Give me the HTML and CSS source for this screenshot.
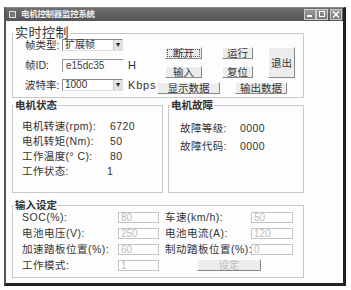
FILE: index.html
```html
<!DOCTYPE html>
<html>
<head>
<meta charset="utf-8">
<link rel="stylesheet" href="styles.css">
</head>
<body>
<div class="screen">
  <div class="window">
    <div class="titlebar">
      <span class="appicon"></span>
      <span class="title">电机控制器监控系统</span>
      <span class="tb-btns">
        <span class="tb-btn"><svg width="10" height="9" viewBox="0 0 10 9"><rect x="2" y="5" width="5" height="2" fill="#fff"/></svg></span>
        <span class="tb-btn"><svg width="10" height="9" viewBox="0 0 10 9"><rect x="2.5" y="1.5" width="5" height="5" fill="none" stroke="#fff" stroke-width="1"/></svg></span>
        <span class="tb-btn close"><svg width="10" height="9" viewBox="0 0 10 9"><path d="M2 1.5 L8 7.5 M8 1.5 L2 7.5" stroke="#fff" stroke-width="1.6"/></svg></span>
      </span>
    </div>
    <div class="client">
      <div class="group g1">
        <div class="legend big">实时控制</div>
        <div class="g1-body">
          <div class="params">
            <span class="plabel">帧类型:</span>
            <span class="select"><span class="sv">扩展帧</span><span class="arrow">▾</span></span>
            <span></span>
            <span class="plabel">帧ID:</span>
            <span class="edit">e15dc35</span>
            <span class="unit">H</span>
            <span class="plabel">波特率:</span>
            <span class="select"><span class="sv">1000</span><span class="arrow">▾</span></span>
            <span class="unit">Kbps</span>
          </div>
          <div class="btns">
            <div class="btn-top">
              <div class="btn-grid">
                <span class="btn focus">断开</span>
                <span class="btn">运行</span>
                <span class="btn">输入</span>
                <span class="btn">复位</span>
              </div>
              <span class="btn exit">退出</span>
            </div>
            <div class="btn-bottom">
              <span class="btn show">显示数据</span>
              <span class="btn out">输出数据</span>
            </div>
          </div>
        </div>
      </div>
      <div class="row2">
        <div class="group g2a">
          <div class="legend">电机状态</div>
          <div class="status">
            <span>电机转速(rpm):</span><span>6720</span>
            <span>电机转矩(Nm):</span><span>50</span>
            <span>工作温度(° C):</span><span>80</span>
            <span>工作状态:</span><span class="st">1</span>
          </div>
        </div>
        <div class="group g2b">
          <div class="legend">电机故障</div>
          <div class="fault">
            <span>故障等级:</span><span>0000</span>
            <span>故障代码:</span><span>0000</span>
          </div>
        </div>
      </div>
      <div class="group g3">
        <div class="legend">输入设定</div>
        <div class="inputs">
          <span class="ilabel">SOC(%):</span><span class="dis">80</span>
          <span class="ilabel r">车速(km/h):</span><span class="dis">50</span>
          <span class="ilabel">电池电压(V):</span><span class="dis">250</span>
          <span class="ilabel r">电池电流(A):</span><span class="dis">120</span>
          <span class="ilabel">加速踏板位置(%):</span><span class="dis">60</span>
          <span class="ilabel r">制动踏板位置(%):</span><span class="dis">0</span>
          <span class="ilabel">工作模式:</span><span class="dis">1</span>
          <span class="btn set">设定</span>
        </div>
      </div>
    </div>
  </div>
</div>
</body>
</html>
```
FILE: styles.css
```css
* { box-sizing: border-box; }
html, body { margin: 0; padding: 0; background: #fff; }
body {
  font-family: "Liberation Sans", "Noto Sans CJK SC", sans-serif;
  font-size: 11px; color: #333; white-space: nowrap;
}
.screen { width: 351px; height: 290px; padding: 7px 0 0 4px; }
.window {
  width: 342px; height: 279px;
  border-top: 1px solid #888;
  border-left: 2px solid #555;
  border-right: 3px solid #222;
  border-bottom: 3px solid #222;
  background: #fdfdfd;
}
.titlebar {
  height: 13px;
  display: flex; align-items: center;
  background: linear-gradient(#6e6e6e, #555);
  padding-left: 3px;
}
.appicon { width: 7px; height: 7px; border: 1px solid #ddd; background: #777; margin-right: 5px; }
.title { color: #eee; font-size: 8.5px; font-weight: bold; line-height: 13px; letter-spacing: -0.3px; }
.tb-btns { margin-left: auto; display: flex; margin-right: 1px; }
.tb-btn { width: 12px; height: 11px; border: 1px solid #ccc; background: linear-gradient(#999, #777); display: flex; align-items: center; justify-content: center; }
.tb-btn.close { margin-left: 2px; }
.client { padding: 0 0 0 6px; }

.group { border: 1px solid #c8c8c8; }
.legend {
  display: block; width: fit-content;
  margin: -8px 0 -6px 1px;
  padding: 0 1px;
  background: #fdfdfd;
  line-height: 14px; height: 14px;
  font-size: 10.5px; font-weight: bold; color: #333;
}
.legend.big { font-size: 13px; font-weight: normal; letter-spacing: 0.5px; }

.g1 { margin-top: 12px; width: 292px; height: 65px; }
.g1-body { display: flex; }
.params {
  width: 144px; margin-top: 5px; padding-left: 12px;
  display: grid; grid-template-columns: 37px 61px auto;
  grid-template-rows: 12px 12px 12px; row-gap: 8px;
  align-items: center;
}
.plabel { font-size: 10.5px; line-height: 12px; }
.select {
  height: 12px; display: flex; align-items: center;
  border-top: 1px solid #888; border-left: 1px solid #888;
  border-right: 1px solid #ddd; border-bottom: 1px solid #ddd;
  background: #fff;
}
.sv { flex: 1; padding-left: 2px; font-size: 10px; line-height: 10px; }
.arrow { width: 9px; height: 10px; background: #e4e4e4; border-left: 1px solid #ccc; font-size: 8px; line-height: 10px; text-align: center; color: #222; }
.edit {
  height: 13px; border-top: 1px solid #999; border-left: 1px solid #999;
  padding-left: 3px; font-size: 10px; line-height: 12px; color: #444;
}
.unit { padding-left: 5px; font-size: 11px; line-height: 12px; letter-spacing: 0.8px; }

.btns { margin-top: 13px; }
.btn {
  display: flex; align-items: center; justify-content: center;
  height: 12px; background: #ececec;
  border-top: 1px solid #fff; border-left: 1px solid #fff;
  border-right: 1px solid #888; border-bottom: 1px solid #888;
  font-size: 10.5px; line-height: 10px; color: #333;
}
.btn-top { display: flex; }
.btn-grid {
  padding-left: 8px;
  display: grid; grid-template-columns: 37px 31px; column-gap: 20px;
  grid-template-rows: 12px 12px; row-gap: 7px;
}
.btn.focus { outline: 1px dotted #555; outline-offset: -3px; }
.btn.exit { width: 27px; height: 31px; margin-left: 15px; }
.btn-bottom { display: flex; margin-top: 4px; }
.btn.show { width: 63px; }
.btn.out { width: 52px; margin-left: 15px; }

.row2 { display: flex; gap: 5px; margin-top: 7px; }
.g2a { width: 151px; height: 88px; }
.g2b { width: 136px; height: 88px; }
.status {
  padding: 13px 0 0 9px;
  display: grid; grid-template-columns: 88px auto;
  grid-auto-rows: 15px; align-items: center;
  font-size: 10.5px; line-height: 15px; letter-spacing: 0.4px;
}
.status .st { margin-left: -3px; }
.fault {
  padding: 13px 0 0 11px;
  display: grid; grid-template-columns: 60px auto;
  grid-auto-rows: 18px; align-items: center;
  font-size: 10.5px; line-height: 18px; letter-spacing: 0.4px;
}

.g3 { margin-top: 12px; width: 292px; height: 73px; }
.inputs {
  padding: 3px 0 0 9px;
  display: grid; grid-template-columns: 96px 41px 92px 42px;
  grid-auto-rows: 16px; align-items: center;
}
.ilabel { font-size: 10.5px; line-height: 16px; letter-spacing: 0.5px; }
.ilabel.r { margin-left: 6px; }
.dis {
  height: 11px; border: 1px solid #c4c4c4; background: #fff;
  color: #bbb; font-size: 10px; line-height: 9px; padding-left: 2px;
}
.btn.set { grid-column: 3 / 5; width: 64px; margin-left: 38px; color: #bbb; }
```
